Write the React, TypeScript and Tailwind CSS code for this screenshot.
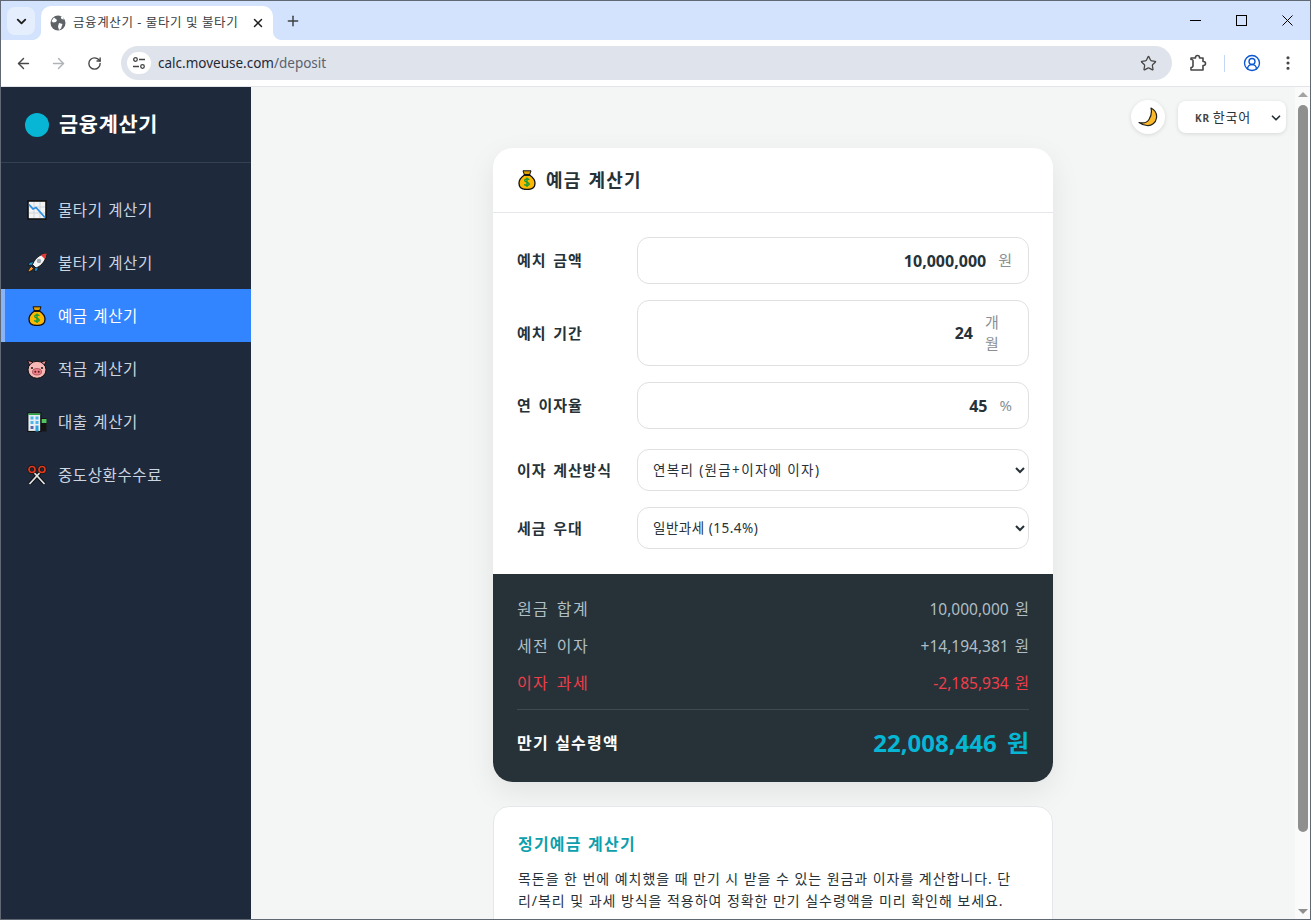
import { ArrowLeft, ArrowRight, ChevronDown, CircleUserRound, EllipsisVertical, Plus, RotateCw, Star, X } from "lucide-react";

const font = { fontFamily: '"Noto Sans", "Noto Sans CJK KR", sans-serif' };

function ChartEmoji() {
  return (
    <svg width="20" height="20" viewBox="0 0 20 20">
      <rect x="1" y="1" width="18" height="18" fill="#f1f3f4" stroke="#111" strokeWidth="1.600" />
      <path d="M7 2v16M13 2v16M2 7h16M2 13h16" stroke="#d0d5da" strokeWidth="1" />
      <path d="M2 4.500l4 4.500 3-1.500 9 10" fill="none" stroke="#2b8fe0" strokeWidth="1.800" />
    </svg>
  );
}

function RocketEmoji() {
  return (
    <svg width="20" height="20" viewBox="0 0 20 20">
      <path d="M7 8.500L2.500 9.500 1 12.500l4.500-.5z" fill="#1c9ad6" stroke="#111" strokeWidth=".8" />
      <path d="M11.500 13l-1 4.500L7.500 19l.5-4.500z" fill="#1c9ad6" stroke="#111" strokeWidth=".8" />
      <path d="M4.500 13.500C2.500 14.500 1.500 17 1 19c2-.5 4.500-1.500 5.500-3.500z" fill="#f59322" stroke="#111" strokeWidth=".8" />
      <path d="M19.500.5c-5 .5-9.500 3-12.500 8l-1.500 3 3.500 3.500 3-1.500c4.500-3 7-7.500 7.500-13z" fill="#f3f4f6" stroke="#111" strokeWidth=".9" />
      <path d="M19.500.5c-2 .2-4 .8-5.500 1.700l3.800 3.800c.9-1.700 1.500-3.500 1.700-5.500z" fill="#e53935" />
      <circle cx="12" cy="8" r="2.200" fill="#9aa5ad" />
    </svg>
  );
}

function BagEmoji() {
  return (
    <svg width="20" height="20" viewBox="0 0 20 20">
      <path d="M6 .8h8L12.500 5h-5z" fill="#e0a000" stroke="#111" strokeWidth="1" />
      <path d="M7.500 5C4.500 7 2 10 2 13.200c0 4.300 3.500 6.300 8 6.300s8-2 8-6.300C18 10 15.500 7 12.500 5z" fill="#fdb900" stroke="#111" strokeWidth="1.300" />
      <path d="M6.800 5h6.400" stroke="#111" strokeWidth="1.500" />
      <path d="M12.300 9.800c-.5-1.200-4.200-1.400-4.700.4-.4 2.400 4.900 1.400 4.700 4-.2 1.700-4.200 1.600-5 .2M10 7.500v9.500" fill="none" stroke="#0a9a3c" strokeWidth="1.300" />
    </svg>
  );
}

function PigEmoji() {
  return (
    <svg width="20" height="20" viewBox="0 0 20 20">
      <path d="M.5 1.500l6 1.500-3 5zM19.500 1.500l-6 1.500 3 5z" fill="#e88a92" stroke="#111" strokeWidth="1" />
      <ellipse cx="10" cy="10.800" rx="9" ry="8.500" fill="#f6b7b5" stroke="#111" strokeWidth="1" />
      <ellipse cx="10" cy="12.800" rx="4.500" ry="3.200" fill="#ec7f86" stroke="#8a2e38" strokeWidth=".6" />
      <circle cx="8.300" cy="12.800" r="1" fill="#5c1a22" />
      <circle cx="11.700" cy="12.800" r="1" fill="#5c1a22" />
      <circle cx="5" cy="9" r="1.100" fill="#222" />
      <circle cx="15" cy="9" r="1.100" fill="#222" />
    </svg>
  );
}

function OfficeEmoji() {
  return (
    <svg width="20" height="20" viewBox="0 0 20 20">
      <rect x="13" y="6" width="6.500" height="13.500" fill="#151515" />
      <rect x="14.500" y="7" width="5" height="4" fill="#54c45e" />
      <rect x=".8" y="1" width="13" height="18.500" fill="#e9eef2" stroke="#111" strokeWidth="1.200" />
      <rect x="1.300" y="1.500" width="12" height="1.500" fill="#27a845" />
      <path d="M3.500 4.500h3v3h-3zM8.500 4.500h3v3h-3zM3.500 9h3v3h-3zM8.500 9h3v3h-3z" fill="#4db5ea" />
      <rect x="3.500" y="14" width="3" height="3" fill="#5566aa" />
      <rect x="8.500" y="13.500" width="3" height="6" fill="#29a3dc" />
    </svg>
  );
}

function ScissorsEmoji() {
  return (
    <svg width="20" height="20" viewBox="0 0 20 20">
      <path d="M6.500 7L17.500 19M13.500 7L2.500 19" stroke="#111" strokeWidth="3.600" />
      <path d="M6.500 7L17.500 19M13.500 7L2.500 19" stroke="#e0e3e6" strokeWidth="1.800" />
      <circle cx="5" cy="4.500" r="3" fill="none" stroke="#111" strokeWidth="3" />
      <circle cx="15" cy="4.500" r="3" fill="none" stroke="#111" strokeWidth="3" />
      <circle cx="5" cy="4.500" r="3" fill="none" stroke="#e03a1e" strokeWidth="1.700" />
      <circle cx="15" cy="4.500" r="3" fill="none" stroke="#e03a1e" strokeWidth="1.700" />
    </svg>
  );
}

function Moon() {
  return (
    <svg width="20" height="20" viewBox="0 0 20 20">
      <path d="M13 1c4 2 6 6 5.500 10-.7 5-5 8-9.500 7.500-3-.3-6-1.500-8-3 4 1 8 0 10-3 2-3 3-7 2-11.500z" fill="#fbb829" stroke="#222" strokeWidth="1.200" strokeLinejoin="round" />
    </svg>
  );
}

const menu = [
  { label: "물타기 계산기", icon: <ChartEmoji /> },
  { label: "불타기 계산기", icon: <RocketEmoji /> },
  { label: "예금 계산기", icon: <BagEmoji />, active: true },
  { label: "적금 계산기", icon: <PigEmoji /> },
  { label: "대출 계산기", icon: <OfficeEmoji /> },
  { label: "중도상환수수료", icon: <ScissorsEmoji /> },
];

function BrowserChrome() {
  return (
    <div className="shrink-0">
      <div className="flex h-[39px] items-end bg-[#d3e3fd]">
        <div className="mb-[5px] ml-[6px] flex h-[28px] w-[28px] items-center justify-center rounded-lg bg-[#e5eefc]">
          <ChevronDown size={15} strokeWidth={3} className="text-[#1f1f1f]" />
        </div>
        <div className="relative ml-[6px] flex h-[34px] w-[232px] items-center rounded-t-[10px] bg-white pl-[9px] pr-[8px]">
          <svg width="8" height="8" viewBox="0 0 8 8" className="absolute bottom-0 left-[-8px]">
            <path d="M8 0v8H0c4 0 8-4 8-8z" fill="#fff" />
          </svg>
          <svg width="8" height="8" viewBox="0 0 8 8" className="absolute bottom-0 right-[-8px]">
            <path d="M0 0v8h8C4 8 0 4 0 0z" fill="#fff" />
          </svg>
          <svg width="16" height="16" viewBox="0 0 16 16" className="shrink-0">
            <circle cx="8" cy="8" r="7.500" fill="#5f6368" />
            <path d="M4 2.500l3 2.500-1 2-3 .5-1.500-1.500zM9 8l3.500 1-1.500 4.500-2 1.500-1-3.500zM10.500 1.500l1 2.500 2.500.5-1-2.500z" fill="#fff" />
          </svg>
          <div className="ml-[7px] w-[164px] overflow-hidden whitespace-nowrap text-[12.500px] tracking-[0.6px] text-[#3c4043]">금융계산기 - 물타기 및 불타기</div>
          <X size={14} strokeWidth={2.500} className="ml-auto text-[#1f1f1f]" />
        </div>
        <Plus size={16} strokeWidth={2.200} className="mb-[11px] ml-[12px] text-[#3c4043]" />
        <div className="mb-[14px] ml-auto flex items-center gap-[35px] pr-[17px]">
          <div className="h-px w-[11px] bg-black" />
          <div className="h-[11px] w-[11px] border border-black" />
          <svg width="11" height="11" viewBox="0 0 11 11" stroke="#000" strokeWidth="1">
            <path d="M.5.5l10 10M10.500.5l-10 10" />
          </svg>
        </div>
      </div>
      <div className="flex h-[47px] items-center rounded-t-lg border-b border-[#e3e5e8] bg-white">
        <ArrowLeft size={17} strokeWidth={2} className="ml-[14px] text-[#474747]" />
        <ArrowRight size={17} strokeWidth={2} className="ml-[18px] text-[#b0b3b6]" />
        <RotateCw size={15} strokeWidth={2.200} className="ml-[20px] text-[#474747]" />
        <div className="ml-[19px] flex h-[34px] w-[1051px] items-center rounded-full bg-[#dfe3eb] pl-[6px] pr-[15px]">
          <div className="flex h-[22px] w-[24px] items-center justify-center rounded-full bg-white">
            <svg width="14" height="14" viewBox="0 0 14 14" fill="none" stroke="#444" strokeWidth="1.300">
              <circle cx="3.500" cy="3.500" r="1.800" />
              <path d="M7 3.500h6M1 10.500h6" />
              <circle cx="10.500" cy="10.500" r="1.800" />
            </svg>
          </div>
          <div className="ml-[7px] text-[13.500px] text-[#1f2a37]">
            calc.moveuse.com<span className="text-[#5a6270]">/deposit</span>
          </div>
          <Star size={17} strokeWidth={1.800} className="ml-auto text-[#474747]" />
        </div>
        <svg width="18" height="18" viewBox="0 0 18 18" fill="none" stroke="#474747" strokeWidth="1.600" strokeLinejoin="round" className="ml-[17px]">
          <path d="M2 4h4.500v-.5a2 2 0 0 1 4 0V4H14v3.500h.5a2 2 0 0 1 0 4H14V16H2v-2.500c1.500 0 2-1 2-2V6.500c0-1-.5-1-2-1z" />
        </svg>
        <div className="ml-[17px] h-[17px] w-px bg-[#c4d7f5]" />
        <CircleUserRound size={18} strokeWidth={1.800} className="ml-[18px] text-[#0b57d0]" />
        <EllipsisVertical size={18} strokeWidth={2.200} className="ml-[18px] text-[#474747]" />
      </div>
    </div>
  );
}

function Sidebar() {
  return (
    <aside className="flex w-[250px] shrink-0 flex-col bg-[#1e293b]">
      <div className="flex h-[76px] items-center gap-[10px] border-b border-[#334155] pl-[24px] text-[20.800px] font-bold tracking-[0.7px] text-white">
        <span className="h-[24px] w-[24px] rounded-full bg-[#06b6d4]" />
        금융계산기
      </div>
      <nav className="flex flex-col pt-[20px]">
        {menu.map((m) =>
          m.active ? (
            <div key={m.label} className="flex h-[53px] items-center gap-[11px] border-l-4 border-[#8ab4f8] bg-[#3384ff] pl-[22px] text-[15.500px] tracking-[0.6px] text-white [word-spacing:1px]">
              {m.icon}
              <span className="pt-[2px]">{m.label}</span>
            </div>
          ) : (
            <div key={m.label} className="flex h-[53px] items-center gap-[11px] pl-[26px] text-[15.500px] tracking-[0.6px] text-[#cbd5e1] [word-spacing:1px]">
              {m.icon}
              <span className="pt-[2px]">{m.label}</span>
            </div>
          ),
        )}
      </nav>
    </aside>
  );
}

function FieldLabel({ text }: { text: string }) {
  return <label className="w-[120px] shrink-0 text-[15px] font-semibold tracking-[0.9px] text-[#263238] [word-spacing:2px]">{text}</label>;
}

function NumberRow({ label, value, unit, tall }: { label: string; value: string; unit: string; tall?: boolean }) {
  return (
    <div className="flex items-center">
      <FieldLabel text={label} />
      <div className={`flex flex-1 items-center rounded-xl border border-[#e0e0e0] bg-white pl-[15px] ${tall ? "h-[66px] pr-[28px]" : "h-[47px] pr-[16px]"}`}>
        <input readOnly value={value} className="w-full min-w-0 flex-1 bg-transparent text-right text-[16px] font-bold text-[#263238] outline-none" />
        <span className={`ml-[12px] shrink-0 text-[15px] text-[#8a8f94] ${tall ? "w-[15px] leading-[21px]" : ""}`}>{unit}</span>
      </div>
    </div>
  );
}

function SelectRow({ label, value, spacing }: { label: string; value: string; spacing: string }) {
  return (
    <div className="flex items-center">
      <FieldLabel text={label} />
      <select defaultValue={value} className={`h-[42px] flex-1 rounded-xl border border-[#e0e0e0] bg-white pl-[11px] text-[13.500px] text-[#263238] outline-none ${spacing}`}>
        <option>{value}</option>
      </select>
    </div>
  );
}

function ResultRow({ label, value, red }: { label: string; value: string; red?: boolean }) {
  return (
    <div className={`flex h-[37px] items-center justify-between ${red ? "text-[#ef3e4a]" : "text-[#b0bec5]"}`}>
      <span className="pb-[2px] text-[16px] tracking-[1.4px] [word-spacing:2px]">{label}</span>
      <span className="text-[15.500px] [word-spacing:2px]">{value}</span>
    </div>
  );
}

function Scrollbar() {
  return (
    <div className="flex w-[15px] shrink-0 flex-col items-center bg-[#fafafa]">
      <div className="mt-[5px] h-0 w-0 border-x-[5px] border-b-[5px] border-x-transparent border-b-[#a3a3a3]" />
      <div className="mt-[8px] h-[727px] w-[10px] rounded-full bg-[#8f8f8f]" />
      <div className="mb-[5px] mt-auto h-0 w-0 border-x-[5px] border-t-[5px] border-x-transparent border-t-[#8f8f8f]" />
    </div>
  );
}

export default function App() {
  return (
    <div style={font} className="flex h-[920px] w-[1311px] flex-col overflow-hidden border border-[#5f6873] bg-white">
      <BrowserChrome />
      <div className="flex min-h-0 flex-1">
        <Sidebar />
        <main className="min-w-0 flex-1 overflow-hidden bg-[#f4f6f6]">
          <div className="flex items-center justify-end gap-[13px] pr-[9px] pt-[13px]">
            <div className="flex h-[34px] w-[34px] items-center justify-center rounded-full bg-white shadow-[0_1px_4px_rgba(0,0,0,0.12)]">
              <Moon />
            </div>
            <div className="flex h-[32px] w-[108px] items-center rounded-lg bg-white pl-[17px] pr-[3px] pt-[2px] text-[13px] tracking-[0.8px] text-[#263238] shadow-[0_1px_4px_rgba(0,0,0,0.12)]">
              <span className="mr-[3px] text-[10px] font-bold text-[#444]">KR</span>
              한국어
              <ChevronDown size={14} strokeWidth={3} className="ml-auto" />
            </div>
          </div>
          <div className="mx-auto mt-[14px] w-[560px]">
            <section className="overflow-hidden rounded-[20px] bg-white shadow-[0_10px_30px_rgba(0,0,0,0.08)]">
              <header className="flex h-[65px] items-center gap-[9px] border-b border-[#e5e7eb] pl-[24px] text-[18px] font-bold tracking-[1.200px] text-[#263238] [word-spacing:1px]">
                <BagEmoji />
                예금 계산기
              </header>
              <div className="flex flex-col px-[24px] pb-[25px] pt-[24px]">
                <NumberRow label="예치 금액" value="10,000,000" unit="원" />
                <div className="h-[16px]" />
                <NumberRow label="예치 기간" value="24" unit="개월" tall />
                <div className="h-[16px]" />
                <NumberRow label="연 이자율" value="45" unit="%" />
                <div className="h-[20px]" />
                <SelectRow label="이자 계산방식" value="연복리 (원금+이자에 이자)" spacing="tracking-[1.350px]" />
                <div className="h-[16px]" />
                <SelectRow label="세금 우대" value="일반과세 (15.4%)" spacing="tracking-[0.500px]" />
              </div>
              <div className="bg-[#263238] px-[24px] pb-[21px] pt-[17px]">
                <ResultRow label="원금 합계" value="10,000,000 원" />
                <ResultRow label="세전 이자" value="+14,194,381 원" />
                <ResultRow label="이자 과세" value="-2,185,934 원" red />
                <div className="mt-[7px] flex items-center justify-between border-t border-[#3d4a52] pt-[15px] text-white">
                  <span className="text-[16px] font-bold tracking-[1.200px] [word-spacing:1px]">만기 실수령액</span>
                  <span className="text-[24px] font-bold text-[#06b6d4] [word-spacing:4px]">22,008,446 원</span>
                </div>
              </div>
            </section>
            <section className="mt-[24px] rounded-[16px] border border-[#e5e7eb] bg-white p-[24px] pt-[25px]">
              <h2 className="text-[16px] font-bold tracking-[1.200px] text-[#0e9fad] [word-spacing:1px]">정기예금 계산기</h2>
              <p className="mt-[12px] text-[14px] leading-[22.400px] tracking-[0.950px] text-[#263238]">
                목돈을 한 번에 예치했을 때 만기 시 받을 수 있는 원금과 이자를 계산합니다. 단리/복리 및 과세 방식을 적용하여 정확한 만기 실수령액을 미리 확인해 보세요.
              </p>
            </section>
          </div>
        </main>
        <Scrollbar />
      </div>
    </div>
  );
}
